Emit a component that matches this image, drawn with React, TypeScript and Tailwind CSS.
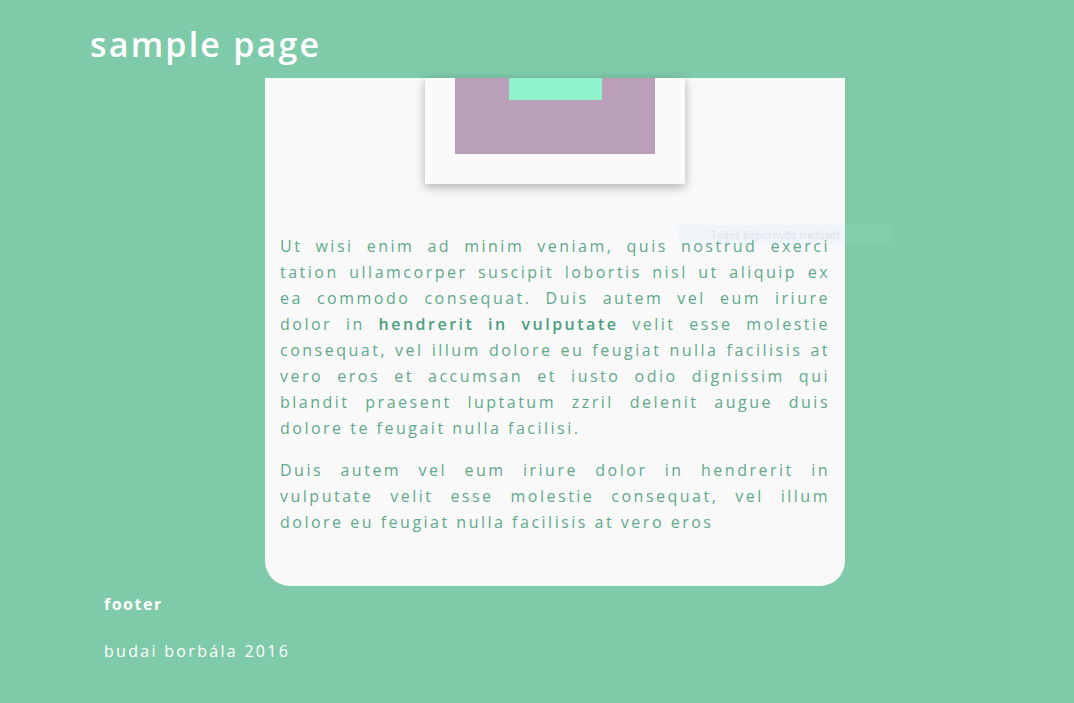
import React from "react";

const p1 = [
  "Ut wisi enim ad minim veniam, quis nostrud exerci",
  "tation ullamcorper suscipit lobortis nisl ut aliquip ex",
  "ea commodo consequat. Duis autem vel eum iriure",
  "__BOLD__",
  "consequat, vel illum dolore eu feugiat nulla facilisis at",
  "vero eros et accumsan et iusto odio dignissim qui",
  "blandit praesent luptatum zzril delenit augue duis",
];

const p2 = [
  "Duis autem vel eum iriure dolor in hendrerit in",
  "vulputate velit esse molestie consequat, vel illum",
];

const Line = ({ children }: { children: React.ReactNode }) => (
  <span className="block text-justify [text-align-last:justify]">{children}</span>
);

const App = () => {
  return (
    <div
      className="min-h-[703px] w-full bg-[#7fcba9] pb-10"
      style={{ fontFamily: '"Open Sans", sans-serif' }}
    >
      <header className="h-[78px] pl-[90px] pt-[22px]">
        <h1 className="text-[34px] font-semibold leading-[44px] tracking-[2.2px] text-white">
          sample page
        </h1>
      </header>

      <main className="relative ml-[265px] w-[580px] rounded-b-[25px] bg-[#f9f9f9] px-[15px] pb-[51px]">
        <div className="flex justify-center">
          <div className="flex h-[106px] w-[260px] justify-center bg-[#fafafa] shadow-[0_3px_10px_rgba(0,0,0,0.3)]">
            <div className="flex h-[76px] w-[200px] justify-center bg-[#ba9fb8]">
              <div className="h-[22px] w-[93px] bg-[#8ff4cc]" />
            </div>
          </div>
        </div>

        {/* screenshot tool tooltip left over the text */}
        <div className="absolute left-[414px] top-[147px] flex h-[20px] w-[211px]">
          <div className="flex w-[166px] items-center bg-[#eff5f9] pl-[32px] text-[11px] whitespace-nowrap text-[#dde2e6]">
            Teljes képernyős metszet
          </div>
          <div className="flex-1 bg-white/[0.04]" />
        </div>

        <div className="relative mt-[49px] text-[16px] leading-[26px] tracking-[2.5px] text-[#5fa98b]">
          <p>
            {p1.map((l, i) =>
              l === "__BOLD__" ? (
                <Line key={i}>
                  dolor in <strong className="font-semibold text-[#4c9f80]">hendrerit in vulputate</strong> velit esse molestie
                </Line>
              ) : (
                <Line key={i}>{l}</Line>
              )
            )}
            <span className="block">dolore te feugait nulla facilisi.</span>
          </p>
          <p className="mt-[16px]">
            {p2.map((l, i) => (
              <Line key={i}>{l}</Line>
            ))}
            <span className="block">dolore eu feugiat nulla facilisis at vero eros</span>
          </p>
        </div>
      </main>

      <footer className="pl-[104px] pt-[7px] text-white">
        <h2 className="text-[16px] font-bold leading-[22px] tracking-[1.5px]">footer</h2>
        <p className="mt-[25px] text-[16px] leading-[22px] tracking-[2.3px]">budai borbála 2016</p>
      </footer>
    </div>
  );
};

export default App;
